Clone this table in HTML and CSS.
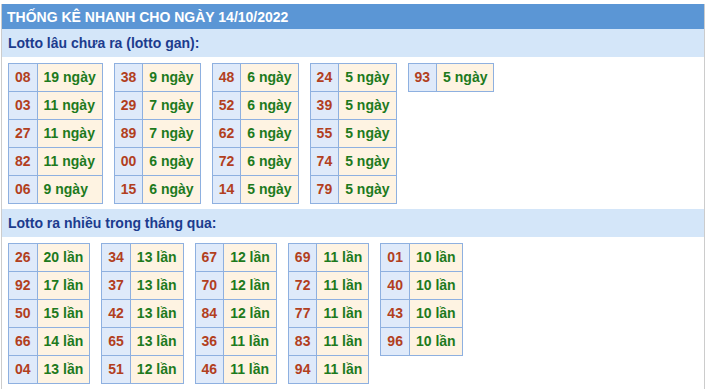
FILE: index.html
```html
<!DOCTYPE html>
<html lang="vi">
<head>
<meta charset="utf-8">
<title>Thống kê nhanh</title>
<link rel="stylesheet" href="styles.css">
</head>
<body>
<div class="box">
  <div class="title">Thống kê nhanh cho ngày 14/10/2022</div>
  <div class="sub">Lotto lâu chưa ra (lotto gan):</div>
  <div class="tables">
    <table class="lt"><tbody>
      <tr><td class="num">08</td><td class="val">19 ngày</td></tr>
      <tr><td class="num">03</td><td class="val">11 ngày</td></tr>
      <tr><td class="num">27</td><td class="val">11 ngày</td></tr>
      <tr><td class="num">82</td><td class="val">11 ngày</td></tr>
      <tr><td class="num">06</td><td class="val">9 ngày</td></tr>
    </tbody></table>
    <table class="lt"><tbody>
      <tr><td class="num">38</td><td class="val">9 ngày</td></tr>
      <tr><td class="num">29</td><td class="val">7 ngày</td></tr>
      <tr><td class="num">89</td><td class="val">7 ngày</td></tr>
      <tr><td class="num">00</td><td class="val">6 ngày</td></tr>
      <tr><td class="num">15</td><td class="val">6 ngày</td></tr>
    </tbody></table>
    <table class="lt"><tbody>
      <tr><td class="num">48</td><td class="val">6 ngày</td></tr>
      <tr><td class="num">52</td><td class="val">6 ngày</td></tr>
      <tr><td class="num">62</td><td class="val">6 ngày</td></tr>
      <tr><td class="num">72</td><td class="val">6 ngày</td></tr>
      <tr><td class="num">14</td><td class="val">5 ngày</td></tr>
    </tbody></table>
    <table class="lt"><tbody>
      <tr><td class="num">24</td><td class="val">5 ngày</td></tr>
      <tr><td class="num">39</td><td class="val">5 ngày</td></tr>
      <tr><td class="num">55</td><td class="val">5 ngày</td></tr>
      <tr><td class="num">74</td><td class="val">5 ngày</td></tr>
      <tr><td class="num">79</td><td class="val">5 ngày</td></tr>
    </tbody></table>
    <table class="lt"><tbody>
      <tr><td class="num">93</td><td class="val">5 ngày</td></tr>
    </tbody></table>
  </div>
  <div class="sub">Lotto ra nhiều trong tháng qua:</div>
  <div class="tables">
    <table class="lt"><tbody>
      <tr><td class="num">26</td><td class="val">20 lần</td></tr>
      <tr><td class="num">92</td><td class="val">17 lần</td></tr>
      <tr><td class="num">50</td><td class="val">15 lần</td></tr>
      <tr><td class="num">66</td><td class="val">14 lần</td></tr>
      <tr><td class="num">04</td><td class="val">13 lần</td></tr>
    </tbody></table>
    <table class="lt"><tbody>
      <tr><td class="num">34</td><td class="val">13 lần</td></tr>
      <tr><td class="num">37</td><td class="val">13 lần</td></tr>
      <tr><td class="num">42</td><td class="val">13 lần</td></tr>
      <tr><td class="num">65</td><td class="val">13 lần</td></tr>
      <tr><td class="num">51</td><td class="val">12 lần</td></tr>
    </tbody></table>
    <table class="lt"><tbody>
      <tr><td class="num">67</td><td class="val">12 lần</td></tr>
      <tr><td class="num">70</td><td class="val">12 lần</td></tr>
      <tr><td class="num">84</td><td class="val">12 lần</td></tr>
      <tr><td class="num">36</td><td class="val">11 lần</td></tr>
      <tr><td class="num">46</td><td class="val">11 lần</td></tr>
    </tbody></table>
    <table class="lt"><tbody>
      <tr><td class="num">69</td><td class="val">11 lần</td></tr>
      <tr><td class="num">72</td><td class="val">11 lần</td></tr>
      <tr><td class="num">77</td><td class="val">11 lần</td></tr>
      <tr><td class="num">83</td><td class="val">11 lần</td></tr>
      <tr><td class="num">94</td><td class="val">11 lần</td></tr>
    </tbody></table>
    <table class="lt"><tbody>
      <tr><td class="num">01</td><td class="val">10 lần</td></tr>
      <tr><td class="num">40</td><td class="val">10 lần</td></tr>
      <tr><td class="num">43</td><td class="val">10 lần</td></tr>
      <tr><td class="num">96</td><td class="val">10 lần</td></tr>
    </tbody></table>
  </div>
</div>
</body>
</html>
```
FILE: styles.css
```css
html, body {
  margin: 0;
  padding: 0;
  background: #ffffff;
}
body {
  font-family: "Liberation Sans", Arial, sans-serif;
  font-size: 14px;
}
.box {
  margin: 4px 4px 0 1px;
  border-left: 1px solid #cccccc;
  border-right: 1px solid #cccccc;
}
.title {
  height: 25px;
  line-height: 26px;
  padding-left: 5px;
  background: #5b96d5;
  color: #ffffff;
  font-weight: bold;
  font-size: 14px;
  text-transform: uppercase;
}
.sub {
  height: 28px;
  line-height: 28px;
  padding-left: 6px;
  background: #d4e6f9;
  color: #1c3c8e;
  font-weight: bold;
  font-size: 14px;
}
.tables {
  display: flex;
  align-items: flex-start;
  gap: 11px;
  padding: 6px 6px 5px;
}
.lt {
  border-collapse: collapse;
}
.lt td {
  border: 1px solid #8eb0e0;
  padding: 0 6px;
  line-height: 27px;
  height: 27px;
  font-weight: bold;
  font-size: 14px;
  white-space: nowrap;
}
.lt .num {
  background: #dfeafa;
  color: #b23f1e;
  text-align: center;
}
.lt .val {
  background: #fef3e2;
  color: #1d7a1d;
}
```
